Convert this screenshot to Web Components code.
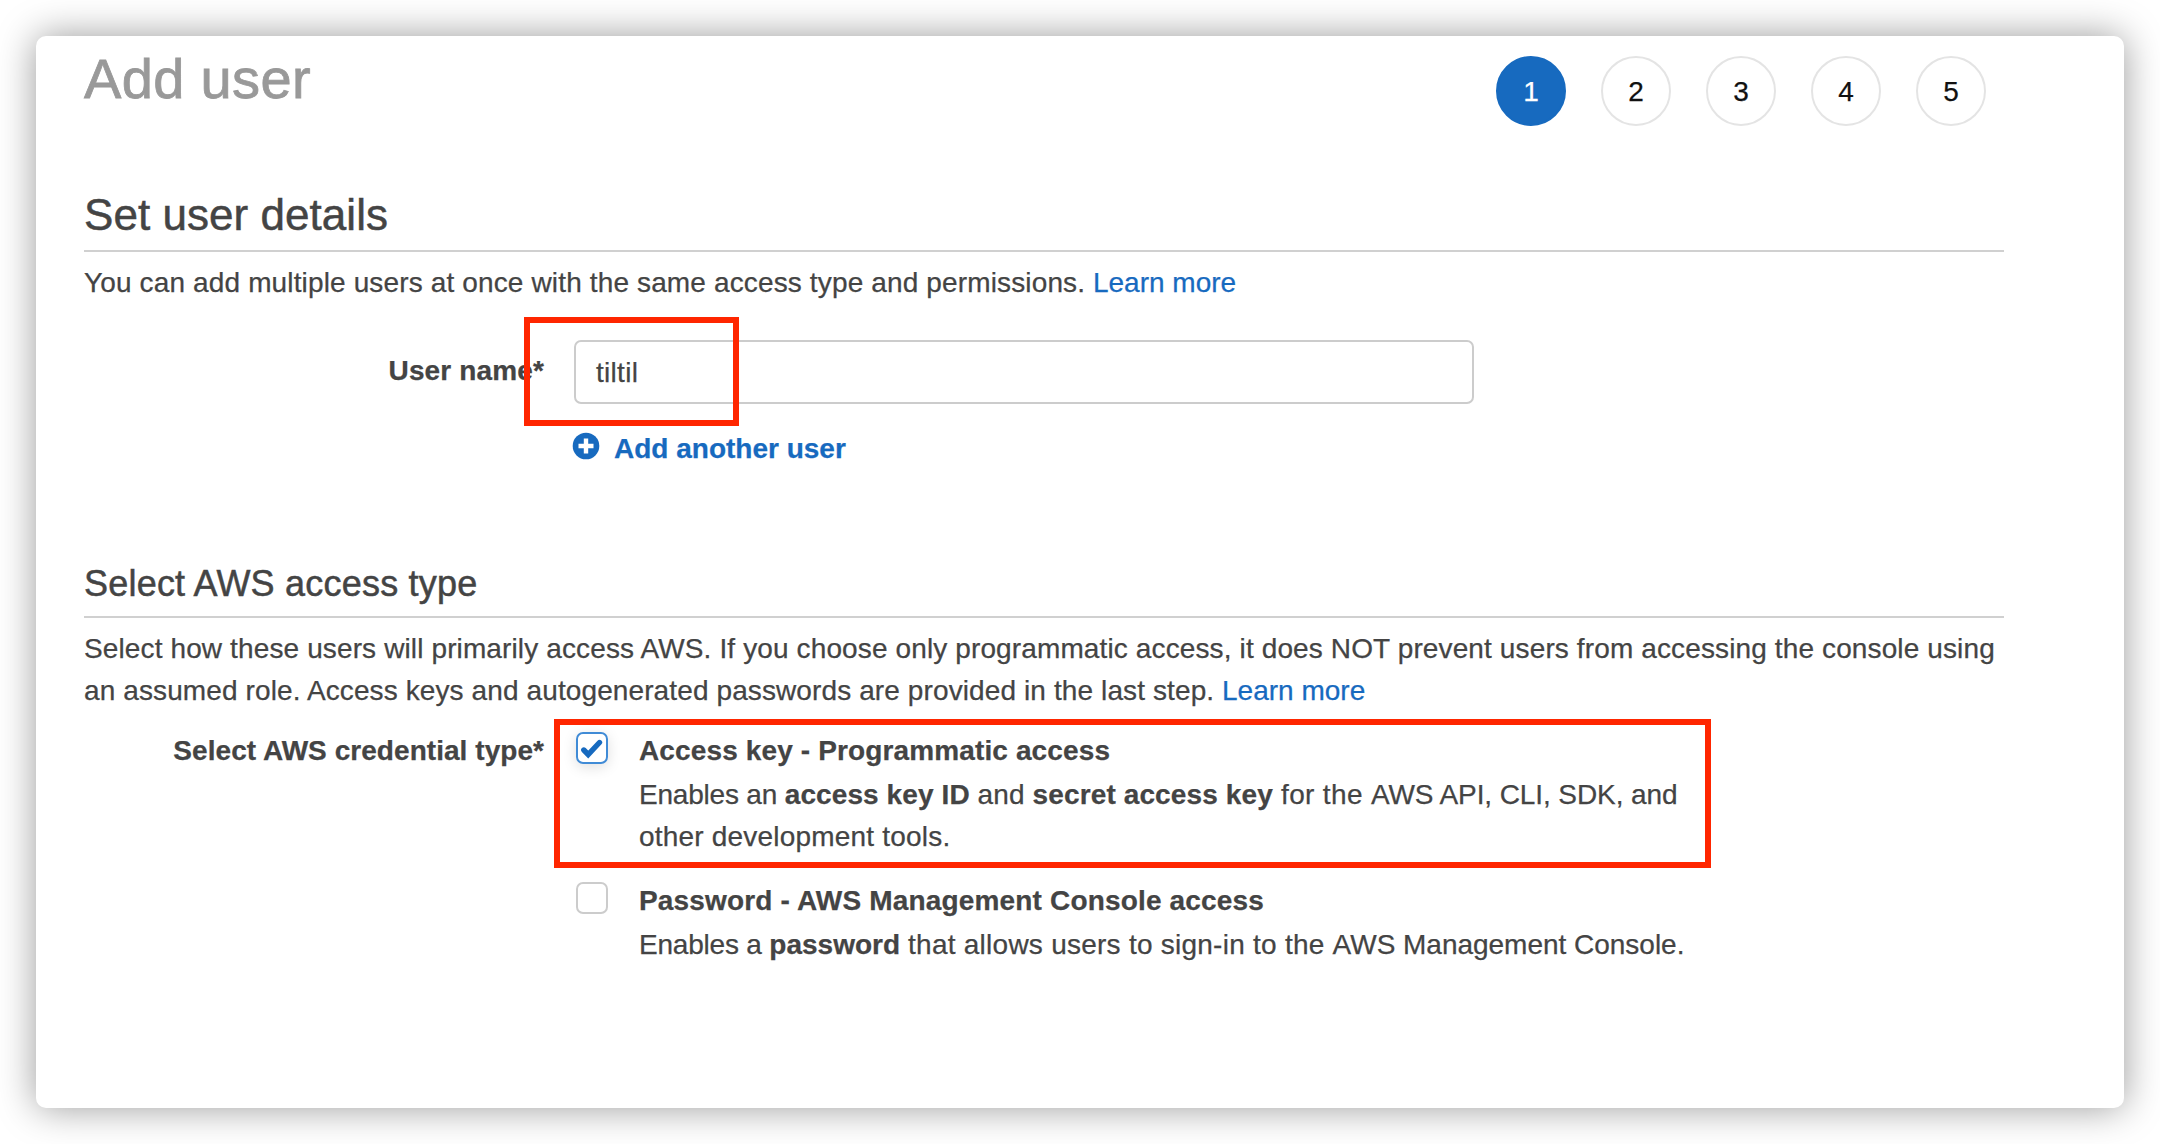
<!DOCTYPE html>
<html lang="en">
<head>
<meta charset="utf-8">
<title>Add user</title>
<style>
  body { margin: 0; background: #fff; font-family: "Liberation Sans", Arial, sans-serif; font-size: 28px; line-height: 42px; color: #444; -webkit-text-stroke-width: .25px; }
</style>
</head>
<body>
<add-user-page></add-user-page>
<script>
const define = (name, html) => {
  const t = document.createElement('template');
  t.innerHTML = html;
  customElements.define(name, class extends HTMLElement {
    constructor() {
      super();
      this.attachShadow({ mode: 'open' }).append(t.content.cloneNode(true));
    }
  });
};

define('window-card', `<style>
  :host { display: block; box-sizing: border-box; width: 2160px; height: 1144px; padding: 36px; overflow: hidden; }
  section { box-sizing: border-box; height: 1072px; padding: 0 120px 0 48px; background: #fff; border-radius: 10px; box-shadow: 0 0 38px rgba(0,0,0,.4); }
</style><section><slot></slot></section>`);

define('step-dot', `<style>
  :host { display: flex; align-items: center; justify-content: center; box-sizing: border-box; width: 70px; height: 70px; padding-top: 2px; border: 2px solid #e4e4e4; border-radius: 50%; color: #111; }
  :host([active]) { background: #176abf; border-color: #176abf; color: #fff; }
</style><slot></slot>`);

define('wizard-header', `<style>
  :host { display: flex; justify-content: space-between; height: 154px; box-sizing: border-box; padding-right: 18px; }
  h1 { margin: 13px 0 0; font-size: 56px; line-height: 60px; font-weight: 400; letter-spacing: .35px; color: #999; -webkit-text-stroke: .8px #999; }
  nav { display: flex; gap: 35px; padding-top: 20px; }
</style><h1><slot></slot></h1><nav><slot name="steps"></slot></nav>`);

define('section-heading', `<style>
  :host { display: block; border-bottom: 2px solid #d0d0d0; font-size: 44px; line-height: 50px; padding-bottom: 10px; color: #444; -webkit-text-stroke: .5px #444; letter-spacing: .05px; }
  :host([small]) { font-size: 36px; line-height: 42px; padding-bottom: 11px; letter-spacing: .21px; }
</style><slot></slot>`);

define('text-link', `<style>
  :host { color: #176abf; }
</style><slot></slot>`);

define('form-row', `<style>
  :host { display: grid; grid-template-columns: 460px 1fr; column-gap: 30px; }
  label { text-align: right; font-weight: 700; white-space: nowrap; }
</style><label><slot name="label"></slot></label><div><slot></slot></div>`);

define('text-field', `<style>
  :host { display: block; box-sizing: border-box; width: 900px; height: 64px; border: 2px solid #ccc; border-radius: 7px; padding: 10px 20px; line-height: 42px; letter-spacing: .3px; }
</style><slot></slot>`);

define('add-link', `<style>
  :host { display: flex; align-items: center; gap: 14px; color: #176abf; font-weight: 700; }
  svg { display: block; width: 28px; height: 28px; margin: -6px 0 0 -2px; }
</style><svg viewBox="0 0 28 28"><circle cx="14" cy="14" r="13.3" fill="#176abf"/><path d="M14 6.5v15M6.5 14h15" stroke="#fff" stroke-width="4.4"/></svg><slot></slot>`);

define('check-box', `<style>
  :host { display: block; box-sizing: border-box; width: 32px; height: 32px; border: 2px solid #ccc; border-radius: 7px; }
  svg { display: none; }
  :host([checked]) { border-color: #408bd6; box-shadow: 0 3px 14px rgba(0,0,0,.13); }
  :host([checked]) svg { display: block; }
</style><svg width="28" height="28" viewBox="0 0 28 28"><path d="M5.8 16L10.200 20.500 21.500 8.500" fill="none" stroke="#176abf" stroke-width="5.400" stroke-linecap="round"/></svg>`);

define('access-option', `<style>
  :host { display: grid; grid-template-columns: 32px 1fr; column-gap: 31px; padding-left: 2px; }
  .box { padding-top: 2px; }
  .title { font-weight: 700; margin-bottom: 2px; }
</style><div class="box"><slot name="box"></slot></div><div><div class="title"><slot name="title"></slot></div><slot></slot></div>`);

define('red-marker', `<style>
  :host { position: absolute; box-sizing: border-box; border: 6px solid #ff2600; pointer-events: none; }
</style>`);

define('add-user-page', `<style>
  :host { display: block; position: relative; }
  .para { margin: 10px 0 0; white-space: nowrap; }
  .name { margin-top: 36px; }
  .name [slot=label] { display: block; padding-top: 10px; letter-spacing: .14px; }
  add-link { margin-top: 24px; }
  .type { margin-top: 93px; }
  .cred { margin-top: 18px; }
  access-option + access-option { margin-top: 22px; }
  red-marker.one { left: 524px; top: 317px; width: 215px; height: 109px; }
  red-marker.two { left: 554px; top: 719px; width: 1157px; height: 149px; }
</style>
<window-card>
  <wizard-header>Add user<step-dot slot="steps" active>1</step-dot><step-dot slot="steps">2</step-dot><step-dot slot="steps">3</step-dot><step-dot slot="steps">4</step-dot><step-dot slot="steps">5</step-dot></wizard-header>
  <section-heading>Set user details</section-heading>
  <div class="para"><span style="letter-spacing:.14px">You can add multiple users at once with the same access type and permissions.</span> <text-link>Learn more</text-link></div>
  <form-row class="name">
    <span slot="label">User name*</span>
    <text-field>tiltil</text-field>
    <add-link>Add another user</add-link>
  </form-row>
  <section-heading small class="type">Select AWS access type</section-heading>
  <div class="para"><span style="letter-spacing:.125px">Select how these users will primarily access AWS. If you choose only programmatic access, it does NOT prevent users from accessing the console using</span><br><span style="letter-spacing:.11px">an assumed role. Access keys and autogenerated passwords are provided in the last step.</span> <text-link>Learn more</text-link></div>
  <form-row class="cred">
    <span slot="label" style="letter-spacing:.05px">Select AWS credential type*</span>
    <access-option>
      <check-box slot="box" checked></check-box>
      <span slot="title" style="letter-spacing:.13px">Access key - Programmatic access</span>
      <span style="letter-spacing:-.2px">Enables an </span><b style="letter-spacing:.1px">access key ID</b><span style="letter-spacing:.12px"> and </span><b style="letter-spacing:.12px">secret access key</b><span style="letter-spacing:.35px"> for the </span><span style="letter-spacing:-.1px">AWS API, CLI, SDK, and</span><br><span style="letter-spacing:.2px">other development tools.</span>
    </access-option>
    <access-option>
      <check-box slot="box"></check-box>
      <span slot="title" style="letter-spacing:.17px">Password - AWS Management Console access</span>
      <span style="letter-spacing:-.2px">Enables a </span><b>password</b><span style="letter-spacing:.25px"> that allows users to sign-in to the </span><span style="letter-spacing:-.02px">AWS Management Console.</span>
    </access-option>
  </form-row>
</window-card>
<red-marker class="one"></red-marker>
<red-marker class="two"></red-marker>`);
</script>
</body>
</html>
